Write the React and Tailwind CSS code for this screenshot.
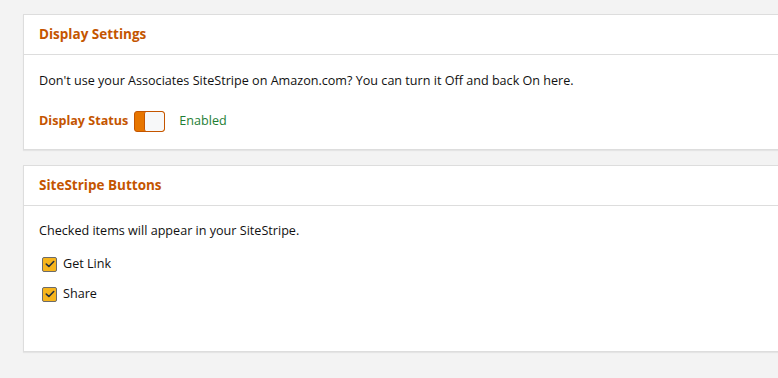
import React, { useState } from 'react';

const Card = ({ title, children, className }) => (
    <div className={`bg-white border border-[#dddddd] shadow-[0_1px_1px_rgba(0,0,0,0.06)] mr-[-40px] ${className}`}>
        <div className="h-[40px] flex items-center px-[15px] border-b border-[#dddddd]">
            <h2 className="text-[13.5px] font-bold text-[#c45500]">{title}</h2>
        </div>
        {children}
    </div>
);

const Check = ({ label, checked, onChange }) => (
    <label className="flex items-center gap-[6px] h-[16px] cursor-pointer">
        <span
            onClick={onChange}
            className="w-[15px] h-[15px] rounded-[2px] border border-[#6b6b6b] bg-[#f7b51c] flex items-center justify-center"
        >
            {checked && (
                <svg width="10" height="8" viewBox="0 0 10 8" fill="none">
                    <path d="M1.3 4.1 L3.9 6.5 L8.7 1.5" stroke="#232f3e" strokeWidth="1.6" strokeLinecap="round" strokeLinejoin="round" />
                </svg>
            )}
        </span>
        <span className="text-[12.6px] text-[#111111]">{label}</span>
    </label>
);

export default function App() {
    const [enabled, setEnabled] = useState(true);
    const [getLink, setGetLink] = useState(true);
    const [share, setShare] = useState(true);

    return (
        <div
            className="min-h-[378px] bg-[#f3f3f3] pl-[23px] pt-[14px] pb-[20px] overflow-hidden"
            style={{ fontFamily: '"Open Sans", "Noto Sans", sans-serif' }}
        >
            {/* Display settings */}
            <Card title="Display Settings">
                <div className="px-[15px] pt-[16px] pb-[17px]">
                    <p className="text-[12.6px] leading-[20px] text-[#111111]">
                        Don't use your Associates SiteStripe on Amazon.com? You can turn it Off and back On here.
                    </p>
                    <div className="flex items-center mt-[20px] h-[21px]">
                        <span className="text-[12.6px] font-bold text-[#c45500] mr-[6px]">Display Status</span>
                        <button
                            onClick={() => setEnabled(!enabled)}
                            className={`w-[31px] h-[21px] rounded-[3px] border border-[#c45500] flex overflow-hidden ${enabled ? 'bg-[#e77600] justify-end' : 'bg-white justify-start'}`}
                            aria-label="Display Status"
                        >
                            <span className="w-[20px] h-full bg-[#f7f8f9] rounded-[2px] border-l border-[#c45500]" />
                        </button>
                        <span className="text-[12.6px] text-[#1e7e34] ml-[14px]">{enabled ? 'Enabled' : 'Disabled'}</span>
                    </div>
                </div>
            </Card>

            {/* SiteStripe buttons */}
            <Card title="SiteStripe Buttons" className="mt-[15px]">
                <div className="px-[15px] pt-[15px] pb-[49px]">
                    <p className="text-[12.6px] leading-[20px] text-[#111111]">
                        Checked items will appear in your SiteStripe.
                    </p>
                    <div className="flex flex-col gap-[14px] mt-[15px] pl-[3px]">
                        <Check label="Get Link" checked={getLink} onChange={() => setGetLink(!getLink)} />
                        <Check label="Share" checked={share} onChange={() => setShare(!share)} />
                    </div>
                </div>
            </Card>
        </div>
    );
}
